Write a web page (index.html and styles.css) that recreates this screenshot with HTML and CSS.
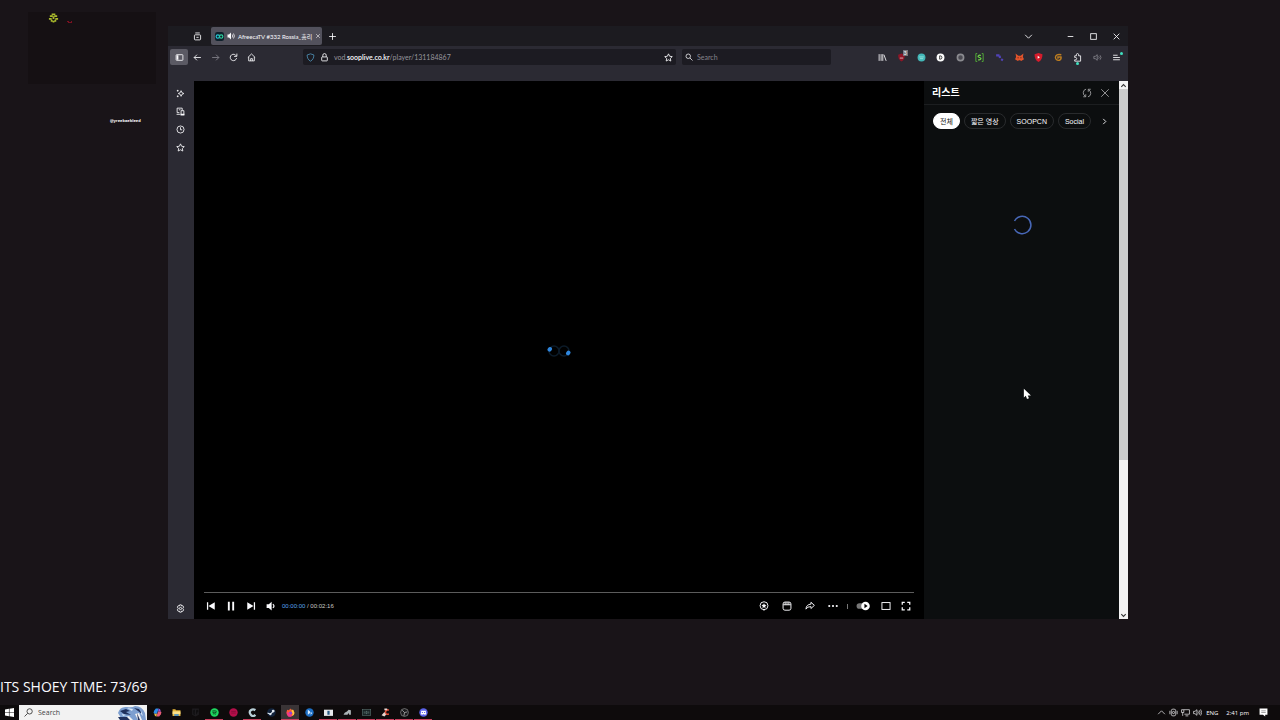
FILE: index.html
```
<!DOCTYPE html>
<html lang="en">
<head>
  <meta charset="UTF-8" />
  <meta name="viewport" content="width=device-width, initial-scale=1.0"/>
  <title>Desktop</title>
  <link rel="stylesheet" href="styles.css">
</head>
<body>
  <main class="desktop">
    <div class="cam-box">
      <svg class="sprite" viewBox="0 0 12 12"><path fill="#a9b92c" d="M4 1h4v2H4zM2 3h3v2H2zM7 3h3v2H7zM5 4h2v3H5zM1 6h3v2H1zM8 6h3v2H8zM3 8h2v2H3zM7 8h2v2H7zM5 9h2v2H5z"/></svg>
      <svg class="sprite-dot" viewBox="0 0 6 4"><path fill="#7a1020" d="M0 1h2v1h2V1h1v2H1V2H0z"/></svg>
    </div>
    <p class="handle">@yreekaebleed</p>

    <section class="window">
      <header class="tab-strip">
        <button class="icon-btn" aria-label="Firefox View"><svg viewBox="0 0 16 16"><path d="M4 1.700h8M2.500 6.500a1.500 1.500 0 0 1 1.500-1.500h8a1.500 1.500 0 0 1 1.500 1.500v6a1.500 1.500 0 0 1-1.500 1.500H4a1.500 1.500 0 0 1-1.500-1.500zM6 9.500h4"/></svg></button>
        <div class="tab">
          <svg class="favicon" viewBox="0 0 16 16"><rect width="16" height="16" rx="4" fill="#10202b"/><g fill="none" stroke-width="2"><circle cx="5" cy="8" r="3" stroke="#25c6d8"/><circle cx="11" cy="8" r="3" stroke="#2fd3a0"/></g></svg>
          <svg class="sound" viewBox="0 0 16 16"><path fill="currentColor" stroke="none" d="M1 5h3l4-4v14l-4-4H1z"/><path d="M10.500 5q2 3 0 6M13 3q3.500 5 0 10"/></svg>
          <span class="tab-title">AfreecaTV #332 Rossia_홈리</span>
          <button class="tab-close" aria-label="Close tab"><svg viewBox="0 0 16 16"><path d="M3 3l10 10M13 3L3 13"/></svg></button>
        </div>
        <button class="icon-btn" aria-label="New tab"><svg viewBox="0 0 16 16"><path d="M8 2v12M2 8h12"/></svg></button>
        <div class="window-buttons">
          <button class="tabs-list" aria-label="List all tabs"><svg viewBox="0 0 16 16"><path d="M2 5l6 6 6-6"/></svg></button>
          <button aria-label="Minimize"><svg viewBox="0 0 16 16"><path d="M3 8h10"/></svg></button>
          <button aria-label="Maximize"><svg viewBox="0 0 16 16"><rect x="3" y="3" width="10" height="10"/></svg></button>
          <button aria-label="Close"><svg viewBox="0 0 16 16"><path d="M3 3l10 10M13 3L3 13"/></svg></button>
        </div>
      </header>

      <div class="toolbar">
        <button class="icon-btn active" aria-label="Sidebar"><svg viewBox="0 0 16 16"><rect x="2" y="3" width="12" height="10" rx="1"/><path d="M3 4h3v8H3z" fill="currentColor" stroke="none"/></svg></button>
        <button class="icon-btn" aria-label="Back"><svg viewBox="0 0 16 16"><path d="M14 8H2M7 3L2 8l5 5"/></svg></button>
        <button class="icon-btn dim" aria-label="Forward"><svg viewBox="0 0 16 16"><path d="M2 8h12M9 3l5 5-5 5"/></svg></button>
        <button class="icon-btn" aria-label="Reload"><svg viewBox="0 0 16 16"><path d="M13.500 9a5.700 5.700 0 1 1-2-5.500L13 5M14 1v5H9"/></svg></button>
        <button class="icon-btn" aria-label="Home"><svg viewBox="0 0 16 16"><path d="M1.500 8L8 1.700 14.500 8M3 7v7h10V7M6.500 14v-4h3v4"/></svg></button>

        <div class="url-bar">
          <svg class="shield" viewBox="0 0 16 16"><path d="M8 1.500l6 2c0 5-2 9-6 11-4-2-6-6-6-11z"/></svg>
          <svg viewBox="0 0 16 16"><rect x="3" y="7" width="10" height="7" rx="1"/><path d="M5 7V4a3 3 0 0 1 6 0v3"/></svg>
          <span class="url">vod.<b>sooplive.co.kr</b>/player/131184867</span>
          <button class="star" aria-label="Bookmark"><svg viewBox="0 0 16 16"><path d="M8 1.500l2 4.300 4.700.6-3.400 3.200.8 4.700L8 12l-4.100 2.300.8-4.700L1.300 6.400 6 5.800z"/></svg></button>
        </div>
        <label class="search-bar">
          <svg viewBox="0 0 16 16"><circle cx="6.500" cy="6.500" r="4.500"/><path d="M10 10l5 5"/></svg>
          <input type="text" placeholder="Search" aria-label="Search the web">
        </label>

        <div class="extensions">
          <button aria-label="Library"><svg viewBox="0 0 16 16"><path d="M2 2v12M5.500 2v12M8.500 2v12M10.500 3l4 11"/></svg></button>
          <button class="with-count" aria-label="Ad blocker"><svg viewBox="0 0 16 16"><path fill="#8e1526" stroke="none" d="M8 1l6 2c0 6-2 10-6 12C4 13 2 9 2 3z"/><path stroke="#e6c5c9" d="M5 9h6"/></svg><span class="count">3</span></button>
          <button aria-label="Extension"><svg viewBox="0 0 16 16"><circle cx="8" cy="8" r="7" fill="#43b7b8" stroke="none"/><path stroke="#9be6e0" d="M4 7h8M5 10h6"/></svg></button>
          <button aria-label="Dark mode"><svg viewBox="0 0 16 16"><circle cx="8" cy="8" r="7" fill="#fff" stroke="none"/><path stroke="#222" d="M6.500 5v6h1q3 0 3-3t-3-3z"/></svg></button>
          <button aria-label="Extension"><svg viewBox="0 0 16 16"><circle cx="8" cy="8" r="5.500" fill="#4b4a52" stroke="#8b8b90" stroke-width="3"/></svg></button>
          <button aria-label="Scripts"><svg viewBox="0 0 16 16"><path stroke="#56b938" d="M4 1H1.500v14H4M12 1h2.500v14H12"/><path stroke="#6fdc46" stroke-width="2" d="M10.500 4.500Q8 3 6 5t2 3 2 3-4.500 1"/></svg></button>
          <button aria-label="Extension"><svg viewBox="0 0 16 16"><path stroke="#5143b8" stroke-width="4" d="M2 4h6M8 5l1 4M11 11l3 2"/></svg></button>
          <button aria-label="Wallet"><svg viewBox="0 0 16 16"><path fill="#e2542c" stroke="none" d="M1 1l5 4h4l5-4-1 6 2 4-5 3-2-1H7l-2 1-5-3 2-4z"/><path stroke="#4d1c14" d="M4.500 8.500h2M9.500 8.500h2"/></svg></button>
          <button aria-label="Video blocker"><svg viewBox="0 0 16 16"><path fill="#d51c2c" stroke="none" d="M8 0l7 2c0 7-2 11-7 14C3 13 1 9 1 2z"/><path fill="#fff" stroke="none" d="M6.500 5l4 2.500-4 2.500z"/></svg></button>
          <button aria-label="Extension"><svg viewBox="0 0 16 16"><path stroke="#bd7d20" stroke-width="2.500" d="M13 3Q3 1 2.500 8q1 6 7 5 4-2 3-6H7v3"/></svg></button>
          <button class="with-dot-below" aria-label="Extensions"><svg viewBox="0 0 16 16"><path d="M3 5h3V3a2 2 0 0 1 4 0v2h3.500v9.500H3V12h1.500a2 2 0 0 0 0-4H3z"/></svg></button>
          <button class="dim" aria-label="Volume"><svg viewBox="0 0 16 16"><path d="M1.500 6h2.500l3.500-3v10L4 10H1.500zM10 6q2 2 0 4M12.500 4q3.500 4 0 8"/></svg></button>
          <button class="with-dot" aria-label="Menu"><svg viewBox="0 0 16 16"><path d="M2 4h8M2 8h12M2 12h12"/></svg></button>
        </div>
      </div>
      <div class="bookmarks"></div>

      <div class="content">
        <nav class="sidebar">
          <button aria-label="AI chat"><svg viewBox="0 0 16 16"><path d="M9 3l1.500 3.500L14 8l-3.500 1.500L9 13 7.500 9.500 4 8l3.500-1.500zM3 1.500v3M1.500 3h3M3 11.500v3M1.500 13h3"/></svg></button>
          <button aria-label="Synced tabs"><svg viewBox="0 0 16 16"><path d="M11 6V2H2v8h4M1 13h6M9 6.500h5v7H9zM5 5h3"/><path d="M8 12h7v3H8z" fill="currentColor" stroke="none"/></svg></button>
          <button aria-label="History"><svg viewBox="0 0 16 16"><circle cx="8" cy="8" r="6.300"/><path d="M8 4v4.500h3"/></svg></button>
          <button aria-label="Bookmarks"><svg viewBox="0 0 16 16"><path d="M8 1.500l2 4.300 4.700.6-3.400 3.200.8 4.700L8 12l-4.100 2.300.8-4.700L1.300 6.400 6 5.800z"/></svg></button>
          <button class="settings" aria-label="Settings"><svg viewBox="0 0 16 16"><path d="M6.500 1.500h3l.6 2 2-.5 1.500 2.500L12 8l1.600 2.500-1.500 2.500-2-.5-.6 2h-3l-.6-2-2 .5-1.500-2.500L4 8 2.400 5.500 3.900 3l2 .5z"/><circle cx="8" cy="8" r="2"/></svg></button>
        </nav>

        <div class="player">
          <div class="stage">
            <svg class="loader" viewBox="0 0 24 12"><g fill="none" stroke="#0c1b29" stroke-width="1.500"><circle cx="7" cy="6" r="5"/><circle cx="17" cy="6" r="5"/></g><path stroke="#2f86dd" stroke-width="4" stroke-linecap="round" d="M2.500 4.700l.5-.7M21 8.300l.5-.7"/></svg>
          </div>
          <div class="progress"></div>
          <div class="controls">
            <button aria-label="Previous"><svg viewBox="0 0 16 16"><path fill="currentColor" stroke="none" d="M1.500 2h2v12h-2zM14 2v12L4 8z"/></svg></button>
            <button aria-label="Pause"><svg viewBox="0 0 16 16"><path fill="currentColor" stroke="none" d="M3 1h3v14H3zM10 1h3v14h-3z"/></svg></button>
            <button aria-label="Next"><svg viewBox="0 0 16 16"><path fill="currentColor" stroke="none" d="M12.500 2h2v12h-2zM2 2v12l10-6z"/></svg></button>
            <button aria-label="Mute"><svg viewBox="0 0 16 16"><path fill="currentColor" stroke="none" d="M1 5h3.500L9 1v14l-4.500-4H1z"/><path stroke-width="2" d="M11 5q3.500 3 0 6"/></svg></button>
            <span class="time"><em>00:00:00</em> / 00:02:16</span>
            <div class="controls-right">
              <button aria-label="Star balloon"><svg viewBox="0 0 16 16"><circle cx="8" cy="7.500" r="6.300"/><path fill="currentColor" stroke="none" d="M8 3.500l1.200 2.600 2.800.3-2 2 .5 2.800L8 9.800l-2.500 1.400.5-2.800-2-2 2.800-.3zM6 13h4l-2 3z"/></svg></button>
              <button aria-label="Clip"><svg viewBox="0 0 16 16"><rect x="1.700" y="1.700" width="12.600" height="13" rx="3"/><path d="M2 6h12M5 2v4M8 2v4M11 2v4"/></svg></button>
              <button aria-label="Share"><svg viewBox="0 0 16 16"><path d="M9.500 2l5.500 5-5.500 5V9Q4 8.500 1.500 13 2 5.500 9.500 5z"/></svg></button>
              <button aria-label="More"><svg viewBox="0 0 16 16"><g fill="currentColor" stroke="none"><circle cx="2" cy="8" r="1.700"/><circle cx="8" cy="8" r="1.700"/><circle cx="14" cy="8" r="1.700"/></g></svg></button>
              <i class="divider"></i>
              <button class="autoplay" aria-label="Autoplay"><svg viewBox="0 0 20 14"><rect x="1" y="3" width="14" height="8" rx="4" fill="#777" stroke="none"/><circle cx="13.500" cy="7" r="6" fill="#fff" stroke="none"/><path fill="#000" stroke="none" d="M12 4l4.500 3-4.500 3z"/></svg></button>
              <button aria-label="Theater"><svg viewBox="0 0 16 16"><rect x="1.500" y="2.500" width="13" height="11"/></svg></button>
              <button aria-label="Fullscreen"><svg viewBox="0 0 16 16"><path stroke-width="2" d="M2 6V2h4M10 2h4v4M14 10v4h-4M6 14H2v-4"/></svg></button>
            </div>
          </div>
        </div>

        <aside class="list-panel">
          <div class="list-head">
            <h2>리스트</h2>
            <button aria-label="Refresh"><svg viewBox="0 0 16 16"><path d="M6.500 1.800Q2 3 2 7.500q0 4 3.500 5.800M2 14h4v-4M9.500 14.200Q14 13 14 8.500q0-4-3.500-5.800M14 2h-4v4"/></svg></button>
            <button aria-label="Close list"><svg viewBox="0 0 16 16"><path d="M2 2l12 12M14 2L2 14"/></svg></button>
          </div>
          <div class="chips">
            <button class="chip selected">전체</button>
            <button class="chip">짧은 영상</button>
            <button class="chip">SOOPCN</button>
            <button class="chip">Social</button>
            <button class="chips-next" aria-label="Next"><svg viewBox="0 0 16 16"><path stroke-width="2" d="M5 2l6 6-6 6"/></svg></button>
          </div>
          <svg class="spinner" viewBox="0 0 20 20"><path d="M2.500 6A8.700 8.700 0 1 1 2.500 14"/></svg>
        </aside>

        <div class="scrollbar">
          <button aria-label="Scroll up"><svg viewBox="0 0 16 16"><path d="M3 11l5-5 5 5"/></svg></button>
          <div class="track"><div class="thumb"></div></div>
          <button aria-label="Scroll down"><svg viewBox="0 0 16 16"><path d="M3 5l5 5 5-5"/></svg></button>
        </div>
      </div>
    </section>

    <svg class="cursor" viewBox="0 0 10 14"><path fill="#fff" stroke="none" d="M1 1v11l2.500-2 1.500 4 2.500-1-1.500-3.500H10z"/></svg>
    <p class="ticker">ITS SHOEY TIME: 73/69</p>
  </main>

  <footer class="taskbar">
    <button class="start" aria-label="Start"><svg viewBox="0 0 16 16"><path fill="#fff" stroke="none" d="M0 2.500l7-1v6H0zM8 1.300L16 0v7.500H8zM0 8.500h7v6l-7-1zM8 8.500h8V16l-8-1.300z"/></svg></button>
    <label class="task-search">
      <svg viewBox="0 0 16 16"><circle cx="10" cy="6" r="4.700"/><path d="M6.500 9.500L1 15"/></svg>
      <input type="text" placeholder="Search" aria-label="Search Windows">
      <svg class="doodle" viewBox="0 0 30 15"><path fill="#7d9fd0" d="M1 8Q3 1 10 2q5 1 8-1 7 0 10 7l1 7h-4l-3-7-4 1 3 6h-5l-4-4-8 2z"/><path fill="#20305c" d="M3 6l6-2 4 2-4 1 5 3-7-1zM17 3l5 1 3 5-4-3zM1 12h9l3 3H3zM20 8l3 7h-2z"/><path fill="#dce9f8" d="M10 3l6 1-1 2zM5 9l4 1-3 1zM24 6l2 5-2-2z"/></svg>
    </label>
    <div class="apps">
      <button aria-label="Copilot"><svg viewBox="0 0 16 16"><path fill="#2d8ee8" d="M5 1h5l-3 9H2Q0 9 2 5z"/><path fill="#e65b74" d="M9 6h5q2 1 0 5l-3 4H6z"/><path fill="#e9b93c" d="M2 10h5l-1 5Q3 15 2 10z"/><path fill="#9b55d8" d="M10 1q3 0 4 5H9z"/></svg></button>
      <button aria-label="Explorer"><svg viewBox="0 0 16 16"><path fill="#e8b63a" d="M1 2h5l1 2h8v10H1z"/><path fill="#fbe28b" d="M1 6h14v5H1z"/><path fill="#3f8fd2" d="M4 11h8v3H4z"/></svg></button>
      <button aria-label="Epic"><svg viewBox="0 0 16 16"><path fill="#1d1b1e" d="M2 1h12v11l-6 3-6-3z"/><path class="line" stroke="#050505" d="M7 4H5v7h2M5 7h2M10 11V4h2v3h-2"/></svg></button>
      <button class="open" aria-label="Spotify"><svg viewBox="0 0 16 16"><circle cx="8" cy="8" r="7.500" fill="#1ed760"/><path class="line" stroke="#0b3518" stroke-width="1.500" d="M4 5.500q4-1.500 8 .5M4.500 8q3.500-1 7 .5M5 10.500q3-1 5.500.5"/></svg></button>
      <button aria-label="App"><svg viewBox="0 0 16 16"><circle cx="8" cy="8" r="7.500" fill="#b30f4a"/><path class="line" stroke="#6e0930" d="M4 6h8M4 9h8"/></svg></button>
      <button class="open" aria-label="App"><svg viewBox="0 0 16 16"><path class="line" stroke="#b9d0d8" stroke-width="4" d="M13 4Q9 1 5 4t0 8 8 0"/></svg></button>
      <button aria-label="Steam"><svg viewBox="0 0 16 16"><circle cx="8" cy="8" r="7.500" fill="#12233c"/><path class="line" stroke="#dfe8f0" stroke-width="2" d="M1 9l5 2 5-5"/><circle cx="11" cy="5.500" r="2.500" fill="#dfe8f0"/><circle cx="6" cy="11" r="2" fill="#dfe8f0"/></svg></button>
      <button class="open current" aria-label="Firefox"><svg viewBox="0 0 16 16"><path fill="#ff5a36" d="M2 3l3 1 3-3 2 3 3-1q3 4 1 9-3 4-8 3-6-2-5-8z"/><path fill="#ffc83c" d="M10 2l3 2q3 4 1 8l-3 2q2-5-1-8z"/><circle cx="8" cy="9" r="3" fill="#8c46d8"/><path fill="#f0388a" d="M1 7l5 2 3 3 2 2q-5 3-8 0z"/></svg></button>
      <button aria-label="App"><svg viewBox="0 0 16 16"><circle cx="8" cy="8" r="7.500" fill="#1d6fc4"/><path fill="#d6ebff" d="M5 3l4 3v3l-4 3zM10 7l3 2-3 3z"/></svg></button>
      <button class="open" aria-label="Store"><svg viewBox="0 0 16 16"><path fill="#e8eaec" d="M0 3h16v11H0z"/><path fill="#2b5c84" d="M6 5h4v7H6z"/></svg></button>
      <button class="open" aria-label="App"><svg viewBox="0 0 16 16"><path fill="#aab2b5" d="M1 12Q2 7 7 6l3-3 4 1v8h-3l-1-3-2 3z"/></svg></button>
      <button class="open" aria-label="App"><svg viewBox="0 0 16 16"><rect x="0.500" y="3" width="15" height="10" fill="#182324" stroke="#5d7774"/><path class="line" stroke="#74918c" d="M4 6v4M7 6h2v4H7zM12 6v4"/></svg></button>
      <button class="open" aria-label="App"><svg viewBox="0 0 16 16"><path class="line" stroke="#e04b35" stroke-width="3" d="M14 4Q9 2 8 7t6 4"/><path fill="#e8d6d0" d="M1 13l5-6 3 5-3 3zM6 1h5v3H6z"/></svg></button>
      <button class="open" aria-label="OBS"><svg viewBox="0 0 16 16"><circle cx="8" cy="8" r="7" fill="#1b1b1d" stroke="#aaa"/><path class="line" stroke="#aaa" stroke-width="1.500" d="M8 8L4 4M8 8l5-1M8 8l-1 6"/></svg></button>
      <button class="open" aria-label="Discord"><svg viewBox="0 0 16 16"><circle cx="8" cy="8" r="7.500" fill="#5b62e8"/><path fill="#fff" d="M4 5h8l1 6-3 1-1-1H7l-1 1-3-1z"/><path fill="#5b62e8" d="M5 7h2v2H5zM9 7h2v2H9z"/></svg></button>
    </div>
    <div class="tray">
      <button aria-label="Show hidden icons"><svg viewBox="0 0 16 16"><path d="M2 11l6-6 6 6"/></svg></button>
      <button aria-label="Camera"><svg viewBox="0 0 16 16"><rect x="4" y="2" width="8" height="12" rx="3"/><circle cx="8" cy="8" r="2"/><path d="M1.500 5v6M14.500 5v6"/></svg></button>
      <button aria-label="Network"><svg viewBox="0 0 16 16"><path d="M5 3h10v8H6M1 3h4v5H1zM3 8v6M8 14h5"/></svg></button>
      <button aria-label="Volume"><svg viewBox="0 0 16 16"><path d="M1 6h2.500L7 3v10l-3.500-3H1zM9 6q2 2 0 4M11 4q3 4 0 8M13.500 2.500q4 5.500 0 11"/></svg></button>
      <span class="lang">ENG</span>
      <time>2:41 pm</time>
      <button class="notify" aria-label="Notifications"><svg viewBox="0 0 16 16"><path fill="#fff" stroke="none" d="M1 1h14v11h-4v3l-4-3H1z"/><path stroke="#777" d="M4 5h8M4 8h8"/></svg></button>
    </div>
  </footer>
</body>
</html>
```
FILE: styles.css
```
* {
  box-sizing: border-box;
}
body {
  margin: 0;
  height: 100vh;
  display: flex;
  flex-direction: column;
  overflow: hidden;
  background: #191418;
  color: #fbfbfe;
  font-family: Lato, "Noto Sans CJK KR", sans-serif;
  font-size: 7px;
}
p, h2 {
  margin: 0;
}
button {
  display: flex;
  align-items: center;
  justify-content: center;
  padding: 0;
  border: none;
  background: none;
  color: inherit;
  font: inherit;
  cursor: pointer;
}
input {
  min-width: 0;
  flex: 1;
  padding: 0;
  border: none;
  outline: none;
  background: none;
  color: inherit;
  font: inherit;
}
svg {
  flex: none;
  width: 9px;
  height: 9px;
  fill: none;
  stroke: currentColor;
  stroke-width: 1.5;
}

/* desktop */
.desktop {
  position: relative;
  flex: 1;
}
.cam-box {
  position: absolute;
  left: 28px;
  top: 12px;
  width: 128px;
  height: 72px;
  display: flex;
  padding-left: 20px;
  background: #151013;
}
.sprite {
  width: 11px;
  height: 12px;
  stroke: none;
}
.sprite-dot {
  width: 6px;
  height: 4px;
  margin: 8px;
  stroke: none;
}
.handle {
  position: absolute;
  left: 110px;
  top: 117px;
  font: bold 4px/8px "Open Sans", sans-serif;
}
.ticker {
  position: absolute;
  left: 0;
  bottom: 8px;
  font: 14px/20px "Open Sans", sans-serif;
}
.cursor {
  position: absolute;
  left: 1023px;
  top: 388px;
  width: 8px;
  height: 11px;
}

/* browser window */
.window {
  position: absolute;
  left: 168px;
  top: 26px;
  right: 152px;
  bottom: 86px;
  display: flex;
  flex-direction: column;
  background: #2b2a33;
}
.tab-strip {
  display: flex;
  align-items: center;
  height: 20px;
  padding-left: 20px;
  background: #1c1b20;
}
.icon-btn {
  width: 18px;
  height: 16px;
}
.tab {
  display: flex;
  align-items: center;
  gap: 3px;
  width: 111px;
  height: 18px;
  margin: 0 1px 0 5px;
  padding: 0 4px;
  border-radius: 2px;
  background: #52515c;
}
.tab .favicon {
  stroke: none;
}
.tab .sound {
  width: 8px;
  height: 8px;
}
.tab-title {
  flex: 1;
  font-size: 6px;
  white-space: nowrap;
}
.tab-close svg {
  width: 6px;
  height: 6px;
}
.window-buttons {
  display: flex;
  margin-left: auto;
}
.window-buttons button {
  width: 23px;
  height: 18px;
}
.window-buttons .tabs-list {
  margin-right: 19px;
}
.toolbar {
  display: flex;
  align-items: center;
  height: 22px;
  padding: 0 5px 0 2px;
}
.icon-btn.active {
  border-radius: 2px;
  background: #5b5a64;
}
.dim {
  color: #85848c;
}
.url-bar, .search-bar {
  display: flex;
  align-items: center;
  height: 16px;
  padding: 0 3px;
  border-radius: 2px;
  background: #1c1b22;
}
.url-bar {
  flex: 0 1 373px;
  gap: 5px;
  margin-left: 43px;
}
.shield {
  color: #4d8fb5;
}
.url {
  flex: 1;
  color: #96959c;
}
.url b {
  color: #fbfbfe;
  font-weight: 600;
}
.search-bar {
  flex: 0 1 149px;
  gap: 4px;
  margin-left: 6px;
}
.search-bar svg {
  width: 8px;
  height: 8px;
}
.search-bar input::placeholder {
  color: #85848c;
  opacity: 1;
}
.extensions {
  display: flex;
  justify-content: space-between;
  width: 247px;
  margin-left: auto;
}
.extensions button {
  position: relative;
  width: 12px;
  height: 16px;
}
.count {
  position: absolute;
  right: 0;
  top: 1px;
  padding: 0 1px;
  background: #77767c;
  font-size: 5px;
  line-height: 6px;
}
.with-dot::after, .with-dot-below::after {
  content: "";
  position: absolute;
  right: 0;
  top: 3px;
  width: 3px;
  height: 3px;
  border-radius: 50%;
  background: #3fe1c0;
}
.with-dot-below::after {
  top: 13px;
  right: 5px;
}
.bookmarks {
  height: 13px;
}
.content {
  flex: 1;
  display: flex;
  min-height: 0;
}
.sidebar {
  display: flex;
  flex-direction: column;
  align-items: center;
  width: 26px;
  padding: 3px 2px 2px 0;
}
.sidebar button {
  width: 18px;
  height: 18px;
}
.sidebar .settings {
  margin-top: auto;
}

/* player */
.player {
  flex: 1;
  display: flex;
  flex-direction: column;
  padding: 0 10px;
  background: #000;
}
.stage {
  flex: 1;
  display: flex;
  align-items: center;
  justify-content: center;
  padding-top: 28px;
}
.loader {
  width: 24px;
  height: 12px;
}
.progress {
  height: 1px;
  background: #5c5c5c;
}
.controls {
  display: flex;
  align-items: center;
  height: 26px;
  margin-left: -3px;
}
.controls button {
  width: 20px;
  height: 20px;
}
.controls svg {
  width: 10px;
  height: 10px;
}
.time {
  margin-left: 1px;
  font: 6px/10px "Liberation Sans", sans-serif;
  color: #c8c8c8;
}
.time em {
  color: #5aa5ee;
  font-style: normal;
}
.controls-right {
  display: flex;
  align-items: center;
  margin-left: auto;
}
.controls-right button {
  width: 23px;
}
.controls .autoplay svg {
  width: 16px;
}
.controls-right button:last-child {
  width: 17px;
}
.divider {
  width: 1px;
  height: 5px;
  margin: 0 3px;
  background: #777;
}

/* list */
.list-panel {
  display: flex;
  flex-direction: column;
  width: 195px;
  background: #0c0e0f;
  font-family: "Liberation Sans", "Noto Sans CJK KR", sans-serif;
}
.list-head {
  display: flex;
  align-items: center;
  height: 24px;
  padding: 0 5px 0 8px;
  border-bottom: 1px solid #1c1e20;
  color: #b9babc;
}
.list-head h2 {
  flex: 1;
  color: #fff;
  font-size: 10px;
  line-height: 12px;
}
.list-head button {
  width: 18px;
  height: 18px;
}
.list-head svg {
  width: 10px;
  height: 10px;
  stroke-width: 1.2;
}
.chips {
  display: flex;
  align-items: center;
  gap: 4px;
  padding: 8px 8px 0 9px;
}
.chip {
  height: 16px;
  padding: 0 6px;
  border: 1px solid #292b2d;
  border-radius: 8px;
  font-size: 7px;
  white-space: nowrap;
}
.chip.selected {
  border-color: #fff;
  background: #fff;
  color: #111;
}
.chips-next {
  margin-left: auto;
  width: 14px;
  height: 14px;
}
.chips-next svg {
  width: 7px;
  height: 7px;
}
.spinner {
  align-self: center;
  width: 20px;
  height: 20px;
  margin-top: 86px;
  stroke: #4868b8;
}
.scrollbar {
  display: flex;
  flex-direction: column;
  width: 9px;
  background: #f3f3f3;
  color: #333;
}
.scrollbar button {
  width: 9px;
  height: 8px;
}
.scrollbar svg {
  width: 7px;
  height: 7px;
  stroke-width: 2.5;
}
.track {
  flex: 1;
}
.thumb {
  height: 71%;
  background: #cdcdcd;
}

/* taskbar */
.taskbar {
  display: flex;
  height: 15px;
  background: #0e0b0c;
}
.start {
  width: 19px;
}
.task-search {
  display: flex;
  align-items: center;
  gap: 5px;
  width: 128px;
  padding-left: 5px;
  background: #f2f2f2;
  color: #333;
  font-family: "Open Sans", sans-serif;
}
.task-search input::placeholder {
  color: #444;
  opacity: 1;
}
.task-search .doodle {
  width: 30px;
  height: 15px;
  stroke: none;
}
.apps {
  display: flex;
  gap: 1px;
  margin-left: 1px;
}
.apps button {
  width: 18px;
  height: 15px;
  padding-top: 1px;
  border-bottom: 1px solid transparent;
}
.apps svg {
  stroke: none;
  stroke-width: 1;
}
.apps .line {
  fill: none;
}
.apps .open {
  border-bottom-color: #c8405e;
}
.apps .current {
  background: #3a3436;
}
.tray {
  display: flex;
  align-items: center;
  margin-left: auto;
  padding-right: 11px;
  font: 6px/10px "Open Sans", sans-serif;
}
.tray button {
  width: 12px;
  height: 15px;
}
.tray svg {
  stroke-width: 1.2;
}
.lang {
  margin: 0 8px 0 3px;
}
.tray .notify {
  margin-left: 8px;
}
```
